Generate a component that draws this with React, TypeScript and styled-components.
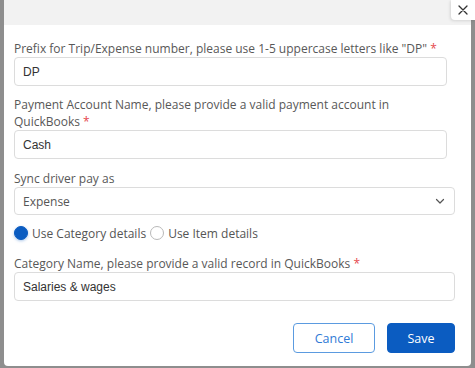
import React from 'react';
import styled, { createGlobalStyle } from 'styled-components';

const GlobalStyle = createGlobalStyle`
  html, body {
    margin: 0;
    padding: 0;
    background: #8e8e8e;
  }
  * {
    box-sizing: border-box;
  }
`;

const Backdrop = styled.div`
  position: relative;
  width: 475px;
  height: 368px;
  padding: 0 4px 2px 4px;
  background: #8e8e8e;
  overflow: hidden;
`;

const Modal = styled.div`
  display: flex;
  flex-direction: column;
  height: 366px;
  background: #ffffff;
  border-radius: 0 0 4px 4px;
`;

const ModalHeader = styled.div`
  height: 25px;
  background: #f2f2f2;
`;

const CloseButton = styled.button`
  position: absolute;
  top: 0;
  right: 0;
  width: 24px;
  height: 20px;
  border: none;
  border-radius: 0 0 0 4px;
  background: #ffffff;
  box-shadow: -1px 1px 3px rgba(0, 0, 0, 0.12);
  display: flex;
  align-items: center;
  justify-content: center;
  padding: 0;
  cursor: pointer;
`;

const Body = styled.div`
  display: flex;
  flex-direction: column;
  padding: 15px 16px 0 10px;
`;

const Field = styled.div<{ $gap?: number }>`
  display: flex;
  flex-direction: column;
  gap: 0;
  margin-bottom: ${(p) => p.$gap ?? 11}px;
`;

const Label = styled.label`
  max-width: 433px;
  font-family: 'Open Sans', sans-serif;
  font-size: 12px;
  line-height: 17px;
  color: #585858;
`;

const Required = styled.span`
  color: #e5484d;
`;

const Input = styled.div<{ $short?: boolean }>`
  width: ${(p) => (p.$short ? '433px' : '441px')};
  height: 29px;
  border: 1px solid #dcdcdc;
  border-radius: 4px;
  padding: 0 8px;
  display: flex;
  align-items: center;
  font-family: 'Liberation Sans', Arial, sans-serif;
  font-size: 12px;
  color: #333333;
`;

const Select = styled(Input)`
  height: 28px;
  justify-content: space-between;
  padding-right: 8px;
  font-family: 'Open Sans', sans-serif;
  font-size: 12px;
  color: #555555;
`;

const RadioRow = styled.div`
  display: flex;
  align-items: center;
  gap: 4px;
  height: 14px;
  margin: 0 0 15px 0;
  font-family: 'Open Sans', sans-serif;
  font-size: 12px;
  color: #555555;
`;

const RadioDot = styled.span<{ $checked?: boolean }>`
  flex: none;
  width: 14px;
  height: 14px;
  border-radius: 50%;
  border: 1px solid ${(p) => (p.$checked ? '#0b5cc1' : '#b9b9b9')};
  background: ${(p) => (p.$checked ? '#0b5cc1' : '#ffffff')};
  box-shadow: ${(p) => (p.$checked ? '0 1px 3px rgba(11, 92, 193, 0.35)' : 'none')};
`;

const Footer = styled.div`
  display: flex;
  justify-content: flex-end;
  gap: 12px;
  padding: 22px 16px 0 0;
`;

const Button = styled.button<{ $primary?: boolean }>`
  height: 30px;
  padding: 0;
  width: ${(p) => (p.$primary ? '68px' : '82px')};
  border-radius: 4px;
  border: 1px solid ${(p) => (p.$primary ? '#0b5cc1' : '#5b9be0')};
  background: ${(p) => (p.$primary ? '#0b5cc1' : '#ffffff')};
  color: ${(p) => (p.$primary ? '#ffffff' : '#2f7ad6')};
  font-family: 'Open Sans', sans-serif;
  font-size: 12.5px;
  cursor: pointer;
`;

export default function App() {
  return (
    <>
      <GlobalStyle />
      <Backdrop>
        <Modal>
          <ModalHeader />
          <Body>
            <Field $gap={10}>
              <Label>
                Prefix for Trip/Expense number, please use 1-5 uppercase letters like "DP" <Required>*</Required>
              </Label>
              <Input $short>DP</Input>
            </Field>
            <Field>
              <Label>
                Payment Account Name, please provide a valid payment account in QuickBooks <Required>*</Required>
              </Label>
              <Input $short>Cash</Input>
            </Field>
            <Field>
              <Label>Sync driver pay as</Label>
              <Select>
                Expense
                <svg width="12" height="12" viewBox="0 0 12 12" fill="none">
                  <path d="M2.5 4.5 L6 8 L9.5 4.5" stroke="#555" strokeWidth="1.2" strokeLinecap="round" strokeLinejoin="round" />
                </svg>
              </Select>
            </Field>
            <RadioRow>
              <RadioDot $checked />
              <span>Use Category details</span>
              <RadioDot />
              <span>Use Item details</span>
            </RadioRow>
            <Field $gap={0}>
              <Label>
                Category Name, please provide a valid record in QuickBooks <Required>*</Required>
              </Label>
              <Input>Salaries &amp; wages</Input>
            </Field>
          </Body>
          <Footer>
            <Button>Cancel</Button>
            <Button $primary>Save</Button>
          </Footer>
        </Modal>
        <CloseButton aria-label="Close">
          <svg width="10" height="10" viewBox="0 0 10 10">
            <path d="M1 1 L9 9 M9 1 L1 9" stroke="#333" strokeWidth="1.3" strokeLinecap="round" />
          </svg>
        </CloseButton>
      </Backdrop>
    </>
  );
}
